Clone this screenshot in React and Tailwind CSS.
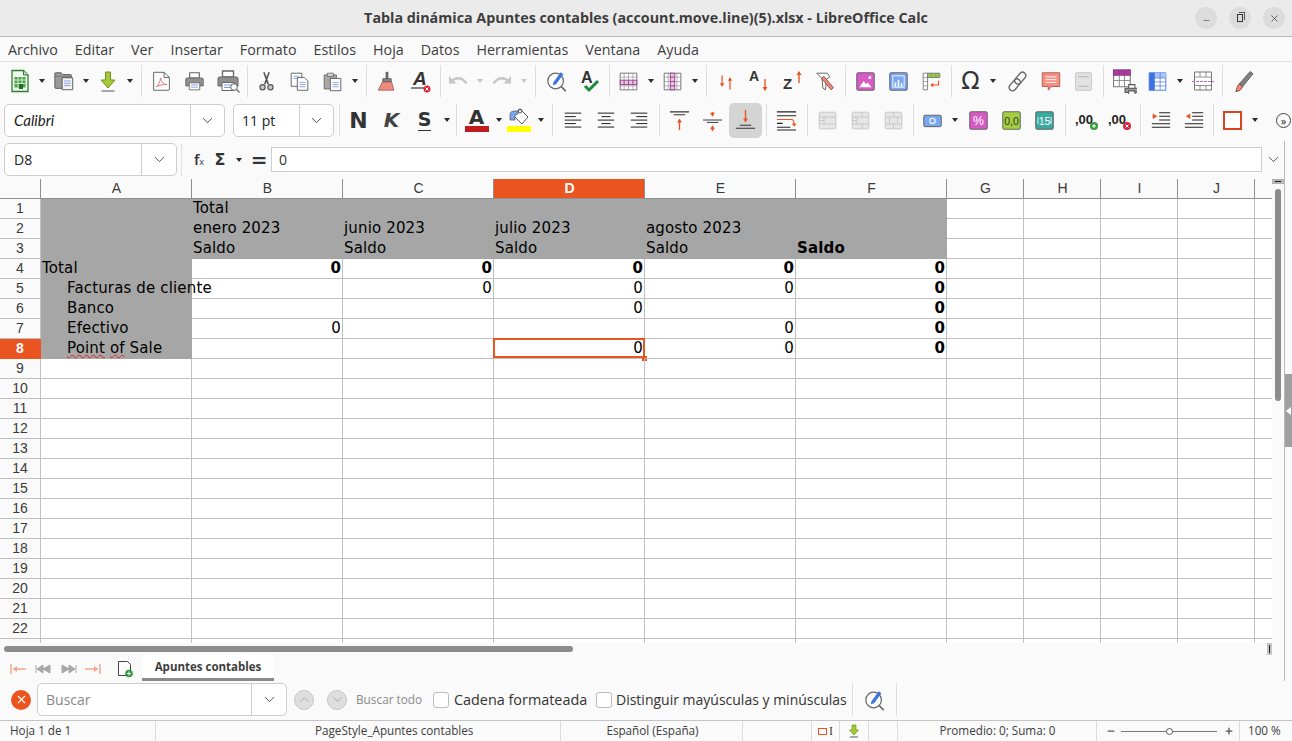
import { ChevronDown, ChevronUp, X, Minus, Plus } from "lucide-react";

const UI = "font-['Open_Sans',sans-serif]";
const CELL = "font-['DejaVu_Sans',sans-serif]";

// --- small toolbar pieces ---
function Ic({ children, w = 21, h = 21 }) {
  return (
    <svg width={w} height={h} viewBox="0 0 24 24" fill="none">
      {children}
    </svg>
  );
}

function Btn({ children, className = "" }) {
  return <div className={`flex h-full w-[33px] shrink-0 items-center justify-center ${className}`}>{children}</div>;
}

function Drop({ className = "" }) {
  return (
    <div className={`flex h-full w-[11px] shrink-0 items-center justify-center ${className}`}>
      <div className="h-0 w-0 border-x-[3.5px] border-t-[4px] border-x-transparent border-t-[#2b2b2b]" />
    </div>
  );
}

function Sep({ kind }) {
  const size = kind === "wide" ? "w-[10px] justify-end pr-[3px]" : kind === "mid" ? "w-[8px] justify-center" : "w-[6px] justify-center";
  return (
    <div className={`flex h-full shrink-0 items-center ${size}`}>
      <div className="h-[32px] w-px bg-[#dedede]" />
    </div>
  );
}

const lines = (color, ys, x1 = 8, x2 = 17) =>
  ys.map((y) => <path key={y} d={`M${x1} ${y}H${x2}`} stroke={color} strokeWidth="1" />);

const IconNew = () => (
  <Ic w={24} h={24}>
    <path d="M4 1.500h11.500l4.500 4.500v16.500h-16z" fill="#f2f8ee" stroke="#2f7d2f" strokeWidth="1.300" />
    <path d="M15.500 1.500v4.500h4.500" fill="#b9dca8" stroke="#2f7d2f" />
    <path d="M6.500 8h11v10.500h-11z" fill="#4aa34a" />
    <path d="M6.500 11h11M6.500 14.500h11M10 8v10.500M14 8v10.500" stroke="#f2f8ee" strokeWidth="0.800" />
    <path d="M11 15h4v5h-4z" fill="#1f6e2a" />
  </Ic>
);
const IconOpen = () => (
  <Ic w={22} h={22}>
    <path d="M2 4a1 1 0 011-1h6l2 2h8a1 1 0 011 1v13a1 1 0 01-1 1h-16a1 1 0 01-1-1z" fill="#9a9a9a" stroke="#555" />
    <path d="M2 7h18" stroke="#777" />
    <path d="M10 8.500h11.500v13h-11.500z" fill="#f4f4f4" stroke="#555" />
    {lines("#7f9bd8", [12, 14.500, 17], 12, 19.500)}
  </Ic>
);
const IconSave = () => (
  <Ic w={24} h={24}>
    <path d="M9.500 3h5v8h4.500l-7 8-7-8h4.500z" fill="#a4c93a" stroke="#6f9420" />
    <path d="M5.500 22h13" stroke="#555" strokeWidth="1" />
  </Ic>
);
const IconPdf = () => (
  <Ic>
    <path d="M3 1.500h12l6 6v13a1.500 1.500 0 01-1.500 1.500h-16.500z" fill="#fff" stroke="#555" />
    <path d="M15 1.500v6h6" stroke="#555" />
    <path d="M6 18c2.500-1.500 4.500-6 5-10 .5 4 3 7 7 7.500-4 0-8 .5-12 2.500z" stroke="#e0707a" strokeWidth="1.100" />
  </Ic>
);
const Printer = () => (
  <>
    <path d="M6.500 2h11v6h-11z" fill="#fff" stroke="#666" strokeWidth="1.300" />
    <path d="M3.500 8h17a1.500 1.500 0 011.500 1.500v7.500h-20v-7.500a1.500 1.500 0 011.500-1.500z" fill="#8f8f8f" stroke="#666" />
    <path d="M6 13.500h12v8h-12z" fill="#fff" stroke="#666" />
    {lines("#7f9bd8", [16, 18.500], 8, 16)}
  </>
);
const IconPrint = () => <Ic><Printer /></Ic>;
const IconPreview = () => (
  <Ic w={24} h={24}>
    <Printer />
    <circle cx="18" cy="18" r="3.300" fill="#fff" stroke="#666" />
    <path d="M20.500 20.500l3 3" stroke="#666" strokeWidth="1.300" />
  </Ic>
);
const IconCut = () => (
  <Ic>
    <path d="M9 1.500l5 13.500M15 1.500l-5 13.500" stroke="#555" strokeWidth="1.800" />
    <circle cx="7.500" cy="18.500" r="3" fill="#c8c8c8" stroke="#555" strokeWidth="1.300" />
    <circle cx="16.500" cy="18.500" r="3" fill="#c8c8c8" stroke="#555" strokeWidth="1.300" />
  </Ic>
);
const IconCopy = () => (
  <Ic>
    <path d="M2.500 2.500h12v15h-12z" fill="#fff" stroke="#555" />
    {lines("#7f9bd8", [6, 8.500], 5, 12)}
    <path d="M9.500 7.500h8l4 4v10.500h-12z" fill="#fff" stroke="#555" />
    {lines("#7f9bd8", [13, 15.500, 18], 12, 19)}
  </Ic>
);
const IconPaste = () => (
  <Ic>
    <path d="M2.500 4.500h14v16h-14z" fill="#a8a8a8" stroke="#666" />
    <path d="M6 2.500h7v3.500h-7z" fill="#ddd" stroke="#666" />
    <path d="M9.500 8.500h12v14h-12z" fill="#fff" stroke="#555" />
    {lines("#7f9bd8", [13, 15.500, 18], 12, 19)}
  </Ic>
);
const IconBrush = () => (
  <Ic w={22} h={22}>
    <path d="M10.500 2h3v8h-3z" fill="#666" />
    <path d="M7.500 9.500h9v3.500h-9z" fill="#888" stroke="#555" />
    <path d="M7 13h10l2.500 9h-17z" fill="#f28b7d" stroke="#8a5048" strokeWidth="0.800" />
  </Ic>
);
const IconClear = () => (
  <Ic w={24} h={24}>
    <text x="4" y="16" fontFamily="Liberation Sans" fontStyle="italic" fontWeight="700" fontSize="19" fill="#333">A</text>
    <path d="M2 19h16" stroke="#333" strokeWidth="1.200" />
    <circle cx="18" cy="20" r="3.500" fill="#d6263b" />
    <path d="M16.500 18.500l3 3m0-3l-3 3" stroke="#fff" />
  </Ic>
);
const IconUndo = ({ flip }) => (
  <Ic w={24} h={24}>
    <g transform={flip ? "matrix(-1 0 0 1 24 0)" : undefined}>
      <path d="M3 7v7.500h7.500z" fill="#c6c6c6" />
      <path d="M5.500 12.500c3.500-4.500 10.500-5 15 2" stroke="#c6c6c6" strokeWidth="2.500" />
    </g>
  </Ic>
);
const IconFind = ({ size = 22 }) => (
  <Ic w={size} h={size}>
    <circle cx="10.500" cy="12" r="8.500" fill="#fff" stroke="#666" strokeWidth="1.300" />
    <path d="M16.500 18l5 5" stroke="#666" strokeWidth="1.800" />
    <path d="M8 13.500l8-11 3 2-8 11-3.500 1z" fill="#3d74e0" />
  </Ic>
);
const IconSpell = () => (
  <Ic w={24} h={24}>
    <text x="3" y="14" fontFamily="Liberation Sans" fontWeight="700" fontSize="16" fill="#333">A</text>
    <path d="M7 17l4 4 9-9" stroke="#1f8a3a" strokeWidth="3" />
  </Ic>
);
const IconRows = ({ mode }) => (
  <Ic>
    <path d="M2.500 2.500h19v19h-19z" fill="#fff" stroke="#666" />
    <path d="M2.500 7h19M2.500 12h19M2.500 17h19M7 2.500v19M12 2.500v19M17 2.500v19" stroke="#888" strokeWidth="0.700" />
    {mode === "row" ? (
      <path d="M2.500 10.500h19v5h-19zM7 10.500v5M12 10.500v5M17 10.500v5" fill="#e5c8e1" stroke="#96308c" />
    ) : (
      <path d="M9.500 2.500h5v19h-5zM9.500 7h5M9.500 12h5M9.500 17h5" fill="#e5c8e1" stroke="#96308c" />
    )}
  </Ic>
);
const Arrow = ({ x, up, y1, y2 }) => (
  <>
    <path d={`M${x} ${y1}V${y2}`} stroke="#e95420" strokeWidth="1.400" />
    <path d={up ? `M${x - 2.500} ${y1 + 3}L${x} ${y1 - 1}l2.500 4z` : `M${x - 2.500} ${y2 - 3}L${x} ${y2 + 1}l2.500-4z`} fill="#e95420" />
  </>
);
const IconSort = () => (
  <Ic>
    <Arrow x={7} y1={5} y2={17} />
    <Arrow x={16} up y1={8} y2={21} />
  </Ic>
);
const IconSortA = () => (
  <Ic w={24} h={24}>
    <text x="1" y="12" fontFamily="Liberation Sans" fontWeight="700" fontSize="14" fill="#333">A</text>
    <Arrow x={17} y1={10} y2={21} />
  </Ic>
);
const IconSortZ = () => (
  <Ic w={24} h={24}>
    <text x="2" y="20" fontFamily="Liberation Sans" fontWeight="700" fontSize="15" fill="#333">Z</text>
    <Arrow x={18} up y1={3} y2={14} />
  </Ic>
);
const IconFilter = () => (
  <Ic>
    <path d="M2 2.500h12l3 4-4 3-1 12-3-2-1-11z" fill="#fff" stroke="#555" />
    <path d="M10 6l11 13-2.500 2.500-11-13z" fill="#f28b7d" stroke="#7a4038" />
  </Ic>
);
const Tile = ({ bg, children }) => (
  <Ic>
    <rect x="2" y="2" width="20" height="20" rx="1.500" fill={bg} stroke="#555" />
    {children}
  </Ic>
);
const IconImage = () => (
  <Tile bg="#d65cc4">
    <path d="M5 18.500l5-7 2.500 3.500 2-2 4.500 5.500z" fill="#fff" />
    <rect x="15.500" y="6" width="3" height="3" fill="#fff" />
  </Tile>
);
const IconChart = () => (
  <Tile bg="#7ba6f2">
    <path d="M5.500 5.500h13v13h-13z" stroke="#fff" />
    <path d="M8.500 18v-5M12 18v-8M15.500 18v-4" stroke="#fff" strokeWidth="1.800" />
  </Tile>
);
const IconPivot = () => (
  <Ic>
    <path d="M2.500 2.500h5v19h-5z" fill="#fff" stroke="#777" />
    <path d="M7.500 2.500h14v5h-14z" fill="#9ac94a" stroke="#777" />
    <path d="M12 2.500v5M17 2.500v5M2.500 7.500h5M2.500 12h5M2.500 17h5" stroke="#777" strokeWidth="0.700" />
    <path d="M20 11v5h-8" stroke="#e95420" strokeWidth="1.400" />
    <path d="M14 13.500l-3.500 2.500 3.500 2.500z" fill="#e95420" />
  </Ic>
);
const IconLink = () => (
  <Ic w={23} h={23}>
    <g transform="rotate(-50 12 12)" stroke="#666" strokeWidth="1.400" fill="#fff">
      <rect x="0.500" y="8.500" width="14" height="7" rx="3.500" />
      <rect x="9.500" y="8.500" width="14" height="7" rx="3.500" fill="none" />
    </g>
  </Ic>
);
const IconNote = () => (
  <Ic w={22} h={22}>
    <path d="M2.500 3h19v15h-9l-3.500 4v-4h-6.500z" fill="#f78f80" stroke="#a85a50" />
    {lines("#fff", [7.500, 10.500, 13.500], 6, 18)}
  </Ic>
);
const IconHeader = () => (
  <Ic>
    <rect x="3" y="2" width="18" height="20" rx="1.500" fill="#e2e2e2" stroke="#c0c0c0" />
    <path d="M6 6.500h12M6 17.500h12" stroke="#bcbcbc" strokeWidth="1.500" />
  </Ic>
);
const IconGridPrint = () => (
  <Ic w={25} h={25}>
    <path d="M1.500 1h16v16h-16z" fill="#fff" stroke="#777" />
    <path d="M1.500 1h16v5h-16zM7 1v5M12 1v5" fill="#a8409c" stroke="#96308c" />
    <path d="M1.500 11h16M7 6v11M12 6v11" stroke="#777" strokeWidth="0.800" />
    <path d="M16 15h6v4h-6z" fill="#fff" stroke="#555" />
    <path d="M12.500 18.500h12v4h-12z" fill="#999" stroke="#555" />
    <path d="M16 21h6v3.500h-6z" fill="#fff" stroke="#555" />
  </Ic>
);
const IconTable = () => (
  <Ic>
    <path d="M2.500 2h19v20h-19z" fill="#fff" stroke="#3d74e0" />
    <path d="M2.500 2h19v6h-19z" fill="#a9c4f5" />
    <path d="M2.500 2h6v20h-6z" fill="#3d74e0" />
    <path d="M2.500 8h19M2.500 12.500h19M2.500 17h19M8.500 2v20M15 2v20" stroke="#3d74e0" strokeWidth="0.800" />
  </Ic>
);
const IconSplit = () => (
  <Ic w={24} h={24}>
    <path d="M3.500 3h17v18h-17z" fill="#fff" stroke="#777" />
    <path d="M3.500 8h17M3.500 16.500h17M9 3v5M15 3v5M9 16.500v4.500M15 16.500v4.500" stroke="#777" strokeWidth="0.800" />
    <path d="M1 12.500h22" stroke="#c36cb8" strokeWidth="1.200" strokeDasharray="3 1" />
  </Ic>
);
const IconPen = () => (
  <Ic w={23} h={23}>
    <path d="M19 1.500l3 2.500-11 13.500-3.500-3z" fill="#808080" stroke="#666" />
    <path d="M7.500 14.500l3.500 3c-1 3-3.500 4.500-7 5 1-3 1.500-5.500 3.500-8z" fill="#f28b7d" stroke="#7a4038" />
  </Ic>
);
const AlignH = ({ mode }) => {
  const s = mode === "l" ? [3, 15] : mode === "c" ? [7, 17] : [9, 21];
  const rows = [[3, 21], s, [3, 21], s, [3, 21]];
  return (
    <Ic w={22} h={22}>
      {rows.map(([a, b], i) => (
        <path key={i} d={`M${a} ${4.500 + i * 3.800}H${b}`} stroke="#222" strokeWidth="1.100" />
      ))}
    </Ic>
  );
};
const IconTop = () => (
  <Ic w={23} h={23}>
    <path d="M2 3h20M6 6h12" stroke="#333" strokeWidth="1.100" />
    <Arrow x={12} up y1={11} y2={22} />
  </Ic>
);
const IconMid = () => (
  <Ic w={23} h={23}>
    <path d="M2 11.500h20M6 14h12" stroke="#333" strokeWidth="1" />
    <Arrow x={12} y1={3} y2={7} />
    <Arrow x={12} up y1={18} y2={23} />
  </Ic>
);
const IconBot = () => (
  <Ic w={23} h={23}>
    <Arrow x={12} y1={1} y2={13} />
    <path d="M6 17h12M2 20h20" stroke="#333" strokeWidth="1.100" />
  </Ic>
);
const IconWrap = () => (
  <Ic w={23} h={23}>
    <path d="M2 3h20M2 7h20M2 19h14M2 15h6M2 22h20" stroke="#222" strokeWidth="1.100" />
    <path d="M2 11h15c2 0 3 1 3 5" stroke="#e95420" strokeWidth="1.100" />
    <path d="M17.500 15h5l-2.500 3.500z" fill="#e95420" />
  </Ic>
);
const Merge = ({ variant }) => (
  <Ic>
    <rect x="2.500" y="2.500" width="19" height="19" rx="1.500" fill="#e6e6e6" stroke="#c4c4c4" />
    <path
      d={variant === 2 ? "M2.500 8h19M2.500 16h19M8 8v8M2.500 12h5.500" : variant === 1 ? "M2.500 8h19M2.500 16h19M14 2.500v5.500M14 16v5.500M8 8v8M2.500 12h5.500" : "M2.500 8h5M16.500 8h5M2.500 16h5M16.500 16h5M7.500 8h9v8h-9zM12 2.500v5.500M12 16v5.500"}
      stroke="#c4c4c4"
    />
  </Ic>
);
const IconCurrency = () => (
  <Ic>
    <rect x="2" y="6" width="20" height="13" rx="1.500" fill="#7ba6f2" stroke="#555" />
    <circle cx="12" cy="12.500" r="3" stroke="#fff" strokeWidth="1.200" />
  </Ic>
);
const TileText = ({ bg, text, color = "#333", size = 13, ticks }) => (
  <Tile bg={bg}>
    {ticks && <path d="M4.500 8v8M19.500 8v8" stroke="#fff" strokeWidth="1" />}
    <text x="12" y="17" textAnchor="middle" fontFamily="Liberation Sans" fontSize={size} fill={color}>{text}</text>
  </Tile>
);
const IconDec = ({ add }) => (
  <Ic w={24} h={24}>
    <text x="0" y="16" fontFamily="Liberation Sans" fontWeight="700" fontSize="13" fill="#222">,00</text>
    <circle cx="19" cy="18" r="4" fill={add ? "#3a9a3a" : "#d6263b"} />
    <path d={add ? "M17 18h4M19 16v4" : "M17.500 16.500l3 3m0-3l-3 3"} stroke="#fff" />
  </Ic>
);
const IconIndent = ({ out }) => (
  <Ic w={22} h={22}>
    <path d="M10 4h12M10 8h12M10 12h12M2 16h20M2 20h20" stroke="#222" strokeWidth="1.100" />
    <path d={out ? "M8 5v6l-5-3z" : "M3 5v6l5-3z"} fill="#e95420" />
  </Ic>
);

const Chevron = () => <ChevronDown size={17} strokeWidth={1.300} className="text-[#444]" />;

function Combo({ width, divider, children }) {
  return (
    <div className={`flex h-[33px] shrink-0 rounded-[5px] border border-[#cdcdcd] bg-white ${width}`}>
      <div className={`flex items-center border-r border-[#cdcdcd] ${divider}`}>{children}</div>
      <div className="flex flex-1 items-center justify-center"><Chevron /></div>
    </div>
  );
}

// --- top of the window ---
const MENU = ["Archivo", "Editar", "Ver", "Insertar", "Formato", "Estilos", "Hoja", "Datos", "Herramientas", "Ventana", "Ayuda"];

function TitleBar() {
  return (
    <div className="relative flex h-[37px] shrink-0 items-center justify-center border-b border-[#b9b9b9] bg-[#ebebeb]">
      <span className={`${UI} text-[14.3px] font-bold text-[#3d3d3d]`}>Tabla dinámica Apuntes contables (account.move.line)(5).xlsx - LibreOffice Calc</span>
      <div className="absolute right-[7px] top-[7px] flex gap-[12px]">
        <div className="flex h-[22px] w-[22px] items-center justify-center rounded-full bg-[#dcdcdc]"><Minus size={9} strokeWidth={1.500} className="mt-[5px] text-[#333]" /></div>
        <div className="flex h-[22px] w-[22px] items-center justify-center rounded-full bg-[#dcdcdc]">
          <div className="relative h-[8px] w-[6px] border border-[#333]">
            <div className="absolute -right-[3px] -top-[3px] h-[8px] w-[6px] border-r border-t border-[#555]" />
          </div>
        </div>
        <div className="flex h-[22px] w-[22px] items-center justify-center rounded-full bg-[#dcdcdc]"><X size={11} strokeWidth={1.500} className="text-[#333]" /></div>
      </div>
    </div>
  );
}

function MenuBar() {
  return (
    <div className={`${UI} flex h-[25px] shrink-0 items-center gap-[17px] border-b border-[#e4e4e4] bg-[#fafafa] pl-[8px] pt-[1px] text-[14.3px] text-[#3d3d3d]`}>
      {MENU.map((m) => <span key={m}>{m}</span>)}
    </div>
  );
}

function ToolbarOne() {
  return (
    <div className="flex h-[38px] shrink-0 items-center bg-[#fafafa] pl-[3px]">
      <Btn><IconNew /></Btn><Drop />
      <Btn><IconOpen /></Btn><Drop />
      <Btn><IconSave /></Btn><Drop />
      <Sep kind="wide" />
      <Btn><IconPdf /></Btn><Btn><IconPrint /></Btn><Btn><IconPreview /></Btn>
      <Sep />
      <Btn><IconCut /></Btn><Btn><IconCopy /></Btn><Btn><IconPaste /></Btn><Drop />
      <Sep kind="wide" />
      <Btn><IconBrush /></Btn><Btn className="ml-[1px]"><IconClear /></Btn>
      <Sep />
      <Btn className="-ml-[2px]"><IconUndo /></Btn><Drop className="opacity-25" />
      <Btn><IconUndo flip /></Btn><Drop className="opacity-25" />
      <Sep kind="wide" />
      <Btn className="ml-[1px]"><IconFind /></Btn><Btn><IconSpell /></Btn>
      <Sep />
      <Btn><IconRows mode="row" /></Btn><Drop />
      <Btn><IconRows mode="col" /></Btn><Drop />
      <Sep kind="wide" />
      <Btn><IconSort /></Btn><Btn><IconSortA /></Btn><Btn><IconSortZ /></Btn><Btn><IconFilter /></Btn>
      <Sep />
      <Btn className="ml-[1px]"><IconImage /></Btn><Btn><IconChart /></Btn><Btn><IconPivot /></Btn>
      <Sep />
      <Btn><span className="font-['DejaVu_Sans',sans-serif] text-[24px] leading-none text-[#333]">Ω</span></Btn><Drop className="mr-[3px]" />
      <Btn><IconLink /></Btn><Btn><IconNote /></Btn><Btn><IconHeader /></Btn>
      <Sep />
      <Btn className="ml-[2px]"><IconGridPrint /></Btn><Btn><IconTable /></Btn><Drop />
      <Btn className="ml-[1px]"><IconSplit /></Btn>
      <Sep />
      <Btn className="ml-[2px]"><IconPen /></Btn>
    </div>
  );
}

function ToolbarTwo() {
  return (
    <div className="flex h-[41px] shrink-0 items-center bg-[#fafafa] pb-[1px] pl-[4px]">
      <Combo width="w-[221px]" divider="w-[186px]">
        <span className="pl-[9px] font-['Lato',sans-serif] text-[15px] italic text-[#222]">Calibri</span>
      </Combo>
      <div className="w-[8px] shrink-0" />
      <Combo width="w-[101px]" divider="w-[66px]">
        <span className={`${UI} pl-[8px] text-[14px] text-[#222]`}>11 pt</span>
      </Combo>
      <div className="ml-[5px] h-[32px] w-px shrink-0 bg-[#dedede]" />
      <div className="w-[2px] shrink-0" />
      <Btn><span className="font-['DejaVu_Sans',sans-serif] text-[22px] font-bold text-[#333]">N</span></Btn>
      <Btn><span className="font-['DejaVu_Sans',sans-serif] text-[20px] font-bold italic text-[#444]">K</span></Btn>
      <Btn><span className="border-b border-[#333] font-['DejaVu_Sans',sans-serif] text-[19px] font-bold leading-[21px] text-[#333]">S</span></Btn>
      <Drop />
      <Sep kind="mid" />
      <Btn>
        <div className="flex flex-col items-center">
          <span className="font-['DejaVu_Sans',sans-serif] text-[20px] font-bold leading-[18px] text-[#333]">A</span>
          <div className="h-[6px] w-[24px] bg-[#c01c1c]" />
        </div>
      </Btn>
      <Drop />
      <Btn className="-ml-[2px]">
        <div className="flex flex-col items-center">
          <svg width="24" height="18" viewBox="0 0 24 18" fill="none">
            <path d="M13 1l8 8-6 7-8-8z" fill="#fff" stroke="#555" />
            <path d="M3 6c0-2 2-3 5-3h3v3l-3 1v5h-5z" fill="#7ba6f2" stroke="#555" strokeWidth="0.700" />
            <circle cx="13" cy="3" r="2" stroke="#555" />
          </svg>
          <div className="h-[6px] w-[24px] bg-[#ffff00]" />
        </div>
      </Btn>
      <Drop />
      <Sep kind="wide" />
      <Btn><AlignH mode="l" /></Btn><Btn><AlignH mode="c" /></Btn><Btn><AlignH mode="r" /></Btn>
      <Sep kind="mid" />
      <Btn><IconTop /></Btn><Btn><IconMid /></Btn>
      <Btn className="!h-[35px] rounded-[5px] bg-[#d4d4d4]"><IconBot /></Btn>
      <Sep kind="mid" />
      <Btn><IconWrap /></Btn>
      <Sep kind="mid" />
      <Btn><Merge variant={2} /></Btn><Btn><Merge variant={1} /></Btn><Btn><Merge variant={0} /></Btn>
      <Sep />
      <Btn><IconCurrency /></Btn><Drop className="mr-[2px]" />
      <Btn><TileText bg="#d65cc4" text="%" color="#fff" size={14} /></Btn>
      <Btn><TileText bg="#a4d040" text="0,0" size={12} /></Btn>
      <Btn><TileText bg="#3aa99f" text="15" color="#fff" size={12} ticks /></Btn>
      <Sep kind="mid" />
      <Btn className="ml-[1px]"><IconDec add /></Btn><Btn><IconDec /></Btn>
      <Sep kind="mid" />
      <Btn><IconIndent /></Btn><Btn><IconIndent out /></Btn>
      <Sep />
      <Btn><div className="h-[19px] w-[19px] border-2 border-[#d9431e] bg-white" /></Btn><Drop />
      <div className="flex w-[31px] items-center justify-end">
        <div className="flex h-[15px] w-[15px] items-center justify-center rounded-full border border-[#444] text-[11px] leading-none text-[#333]">»</div>
      </div>
    </div>
  );
}

function FormulaBar() {
  return (
    <div className="flex h-[38px] shrink-0 items-center pb-[1px] pl-[4px]">
      <Combo width="w-[173px]" divider="w-[137px]">
        <span className={`${UI} pl-[9px] text-[14px] text-[#222]`}>D8</span>
      </Combo>
      <div className="ml-[4px] h-[32px] w-px shrink-0 bg-[#dedede]" />
      <span className={`${UI} ml-[10px] flex w-[14px] shrink-0 items-baseline justify-center text-[15px] font-semibold text-[#333]`}>f<span className="text-[9px] font-normal">x</span></span>
      <span className="ml-[7px] flex w-[14px] shrink-0 justify-center font-['DejaVu_Sans',sans-serif] text-[16px] font-bold text-[#333]">Σ</span>
      <div className="ml-[9px] h-0 w-0 shrink-0 border-x-[3.5px] border-t-[4px] border-x-transparent border-t-[#2b2b2b]" />
      <span className="ml-[10px] flex w-[14px] shrink-0 justify-center font-['DejaVu_Sans',sans-serif] text-[20px] font-bold leading-none text-[#333]">=</span>
      <div className={`${UI} ml-[5px] flex h-[25px] w-[991px] shrink-0 items-center border border-[#cdcdcd] bg-white pl-[7px] text-[14px] text-[#333]`}>0</div>
      <div className="flex flex-1 items-center justify-center"><Chevron /></div>
    </div>
  );
}

// --- spreadsheet ---
const COLS = ["A", "B", "C", "D", "E", "F", "G", "H", "I", "J", ""];
const colClass = (c) => (c < 6 ? "w-[151px]" : c < 10 ? "w-[77px]" : "w-[18px]");

// text cells are left aligned, { n } numbers right aligned, b means bold
const DATA = {
  1: { 1: { t: "Total" } },
  2: { 1: { t: "enero 2023" }, 2: { t: "junio 2023" }, 3: { t: "julio 2023" }, 4: { t: "agosto 2023" } },
  3: { 1: { t: "Saldo" }, 2: { t: "Saldo" }, 3: { t: "Saldo" }, 4: { t: "Saldo" }, 5: { t: "Saldo", b: true } },
  4: { 0: { t: "Total" }, 1: { n: "0", b: true }, 2: { n: "0", b: true }, 3: { n: "0", b: true }, 4: { n: "0", b: true }, 5: { n: "0", b: true } },
  5: { 0: { t: "Facturas de cliente", i: true }, 2: { n: "0" }, 3: { n: "0" }, 4: { n: "0" }, 5: { n: "0", b: true } },
  6: { 0: { t: "Banco", i: true }, 3: { n: "0" }, 5: { n: "0", b: true } },
  7: { 0: { t: "Efectivo", i: true }, 1: { n: "0" }, 4: { n: "0" }, 5: { n: "0", b: true } },
  8: { 0: { t: "Point of Sale", i: true, wavy: true }, 3: { n: "0", sel: true }, 4: { n: "0" }, 5: { n: "0", b: true } },
};

function Cell({ r, c }) {
  const d = DATA[r]?.[c];
  const gray = (r <= 3 && c <= 5) || (r <= 8 && c === 0);
  return (
    <div
      className={`relative h-[20px] shrink-0 whitespace-nowrap border-b border-r text-[15px] leading-[18px] tracking-[0.15px] text-black ${colClass(c)}
        ${gray ? "border-[#a6a6a6] bg-[#a6a6a6]" : "border-[#c0c0c0]"}
        ${d?.n ? "pr-px text-right" : d?.i ? "pl-[26px]" : "pl-px"} ${d?.b ? "font-bold" : ""}`}
    >
      {d?.wavy ? (
        <>
          <span className="underline decoration-[#e02020] decoration-wavy decoration-1 underline-offset-1">Point</span>{" "}
          <span className="underline decoration-[#e02020] decoration-wavy decoration-1 underline-offset-1">of</span> Sale
        </>
      ) : (
        d?.t || d?.n
      )}
      {d?.sel && (
        <>
          <div className="absolute -left-px -top-px h-[20px] w-[152px] border-2 border-[#e95420]" />
          <div className="absolute -bottom-[3px] -right-[3px] h-[5px] w-[5px] bg-[#e95420]" />
        </>
      )}
    </div>
  );
}

function Sheet() {
  const rows = Array.from({ length: 23 }, (_, i) => i + 1);
  return (
    <div className={`${CELL} h-[464px] shrink-0 overflow-hidden bg-white`}>
      <div className="flex h-[20px] bg-[#fafafa]">
        <div className="h-[20px] w-[41px] shrink-0 border-b border-r border-[#8f8f8f]" />
        {COLS.map((name, c) => (
          <div
            key={c}
            className={`flex h-[20px] shrink-0 items-center justify-center border-b border-r border-[#8f8f8f] pl-px font-['Liberation_Sans',sans-serif] text-[14px] ${colClass(c)} ${name === "D" ? "bg-[#e95420] font-bold text-white" : "text-[#3a3a3a]"} ${c === 10 ? "border-r-0" : ""}`}
          >
            {name}
          </div>
        ))}
      </div>
      {rows.map((r) => (
        <div key={r} className="flex h-[20px]">
          <div className={`flex h-[20px] w-[41px] shrink-0 items-center justify-center border-b border-r font-['Liberation_Sans',sans-serif] text-[14px] ${r === 8 ? "border-[#e95420] bg-[#e95420] font-bold text-white" : "border-[#c0c0c0] bg-[#fafafa] text-[#3a3a3a]"}`}>
            {r < 23 ? r : ""}
          </div>
          {COLS.map((_, c) => <Cell key={c} r={r} c={c} />)}
        </div>
      ))}
    </div>
  );
}

function HScroll() {
  return (
    <div className="flex h-[12px] shrink-0 items-center justify-between bg-[#fafafa] pl-[4px]">
      <div className="h-[6px] w-[569px] rounded-[3px] bg-[#8c8c8c]" />
      <div className="flex h-[12px] w-[5px] items-center justify-center bg-[#c4c4c4]"><div className="h-[8px] w-px bg-[#222]" /></div>
    </div>
  );
}

function TabBar() {
  const nav = "#f4a58a";
  return (
    <div className={`${UI} flex h-[26px] shrink-0 items-center bg-[#fafafa]`}>
      <svg width="100" height="14" viewBox="0 0 100 14" fill="none" className="ml-[10px] mt-[2px] shrink-0">
        <path d="M1 2v10M3 7h13" stroke={nav} strokeWidth="1.500" />
        <path d="M3 7l4-3v6z" fill={nav} />
        <path d="M26 3v8M27 7l6-4v8zM33 7l7-4v8z" fill="#a8a8a8" stroke="#a8a8a8" />
        <path d="M52 3l7 4-7 4zM59 3l6 4-6 4z" fill="#a8a8a8" stroke="#a8a8a8" />
        <path d="M66 3v8" stroke="#a8a8a8" />
        <path d="M75 7h13M90 2v10" stroke={nav} strokeWidth="1.500" />
        <path d="M88 7l-4-3v6z" fill={nav} />
      </svg>
      <svg width="18" height="18" viewBox="0 0 18 18" fill="none" className="ml-[6px] mt-[2px] shrink-0">
        <path d="M2.500 1.500h9l3 3v11h-12z" fill="#fff" stroke="#444" />
        <circle cx="13" cy="13.500" r="3.800" fill="#2e9a3e" />
        <path d="M11 13.500h4M13 11.500v4" stroke="#fff" />
      </svg>
      <div className="ml-[8px] flex h-[26px] w-[132px] shrink-0 items-center justify-center border-b-[3px] border-[#8a8a8a] bg-white text-[11.5px] font-bold text-[#3d3d3d]">
        Apuntes contables
      </div>
    </div>
  );
}

function FindBar() {
  return (
    <div className={`${UI} flex h-[38px] shrink-0 items-center bg-[#fafafa] pb-[1px] pl-[11px] text-[14px]`}>
      <div className="flex h-[20px] w-[20px] shrink-0 items-center justify-center rounded-full bg-[#e95420]"><X size={13} className="text-white" /></div>
      <div className="ml-[6px] flex h-[33px] w-[250px] shrink-0 rounded-[5px] border border-[#cdcdcd] bg-white">
        <div className="flex w-[214px] items-center border-r border-[#cdcdcd] pl-[8px] text-[#888]">Buscar</div>
        <div className="flex flex-1 items-center justify-center"><Chevron /></div>
      </div>
      <div className="ml-[7px] flex h-[20px] w-[20px] shrink-0 items-center justify-center rounded-full border border-[#c4c4c4] bg-[#dedede]"><ChevronUp size={15} strokeWidth={1.300} className="text-[#999]" /></div>
      <div className="ml-[13px] flex h-[20px] w-[20px] shrink-0 items-center justify-center rounded-full border border-[#c4c4c4] bg-[#dedede]"><ChevronDown size={15} strokeWidth={1.300} className="text-[#999]" /></div>
      <span className="ml-[9px] w-[66px] shrink-0 whitespace-nowrap text-[11.8px] text-[#8a8a8a]">Buscar todo</span>
      <div className="ml-[11px] h-[16px] w-[16px] shrink-0 rounded-[3px] border border-[#bbb] bg-white" />
      <span className="ml-[5px] w-[142px] shrink-0 whitespace-nowrap text-[14.4px] text-[#333]">Cadena formateada</span>
      <div className="h-[16px] w-[16px] shrink-0 rounded-[3px] border border-[#bbb] bg-white" />
      <span className="ml-[4px] w-[232px] shrink-0 whitespace-nowrap text-[#333]">Distinguir mayúsculas y minúsculas</span>
      <div className="ml-[4px] h-[33px] w-px bg-[#dedede]" />
      <div className="flex w-[43px] justify-center"><IconFind /></div>
      <div className="h-[33px] w-px bg-[#dedede]" />
    </div>
  );
}

function StatusCell({ className = "", children }) {
  return <div className={`flex h-full shrink-0 items-center border-r border-[#dcdcdc] ${className}`}>{children}</div>;
}

function StatusBar() {
  return (
    <div className={`${UI} mt-auto flex h-[21px] shrink-0 items-center border-t border-[#c4c4c4] bg-[#fafafa] text-[11.7px] text-[#3d3d3d]`}>
      <StatusCell className="w-[156px] pl-[10px]">Hoja 1 de 1</StatusCell>
      <StatusCell className="w-[405px] pl-[159px]">PageStyle_Apuntes contables</StatusCell>
      <StatusCell className="w-[182px] justify-center pl-[2px]">Español (España)</StatusCell>
      <StatusCell className="w-[69px]" />
      <StatusCell className="w-[28px] justify-center gap-[2px]">
        <span className="h-[7px] w-[9px] border border-[#e95420]" />
        <span className="font-['Liberation_Serif',serif] text-[12px] leading-none">I</span>
      </StatusCell>
      <StatusCell className="w-[29px] justify-center">
        <svg width="10" height="14" viewBox="0 0 10 14" fill="none"><path d="M3 1h4v5h2.500l-4.500 5-4.500-5h2.500z" fill="#a4c93a" stroke="#6f9420" strokeWidth="0.700" /><path d="M1 13h8" stroke="#555" /></svg>
      </StatusCell>
      <StatusCell className="w-[29px]" />
      <StatusCell className="w-[199px] justify-center pl-[1px]">Promedio: 0; Suma: 0</StatusCell>
      <StatusCell className="w-[143px] gap-[5px] pl-[9px]">
        <Minus size={10} strokeWidth={3} className="text-[#555]" />
        <div className="relative h-px w-[96px] bg-[#777]">
          <div className="absolute -top-[3px] left-[45px] h-[7px] w-[7px] rounded-full border border-[#555] bg-white" />
        </div>
        <Plus size={10} strokeWidth={3} className="ml-[2px] text-[#555]" />
      </StatusCell>
      <div className="pl-[8px]">100 %</div>
    </div>
  );
}

export default function App() {
  return (
    <div className="flex h-screen w-full flex-col overflow-hidden bg-[#fafafa]">
      <TitleBar />
      <MenuBar />
      <ToolbarOne />
      <ToolbarTwo />
      <div className="flex h-[540px] shrink-0">
        <div className="relative flex w-[1284px] shrink-0 flex-col">
          <FormulaBar />
          <div className="flex">
            <div className="w-[1272px] shrink-0">
              <Sheet />
              <HScroll />
              <TabBar />
            </div>
            <div className="relative w-[12px] shrink-0">
              <div className="flex h-[5px] items-center justify-center bg-[#b4b4b4]"><div className="h-px w-[6px] bg-[#222]" /></div>
              <div className="ml-[3px] mt-[5px] h-[212px] w-[6px] rounded-[3px] bg-[#8c8c8c]" />
            </div>
          </div>
        </div>
        <div className="flex flex-1 flex-col border-l border-[#b9b9b9]">
          <div className="mt-[233px] flex h-[73px] items-center justify-center bg-[#a0a0a0]">
            <div className="h-0 w-0 border-y-[4px] border-r-[5px] border-y-transparent border-r-white" />
          </div>
        </div>
      </div>
      <FindBar />
      <StatusBar />
    </div>
  );
}
